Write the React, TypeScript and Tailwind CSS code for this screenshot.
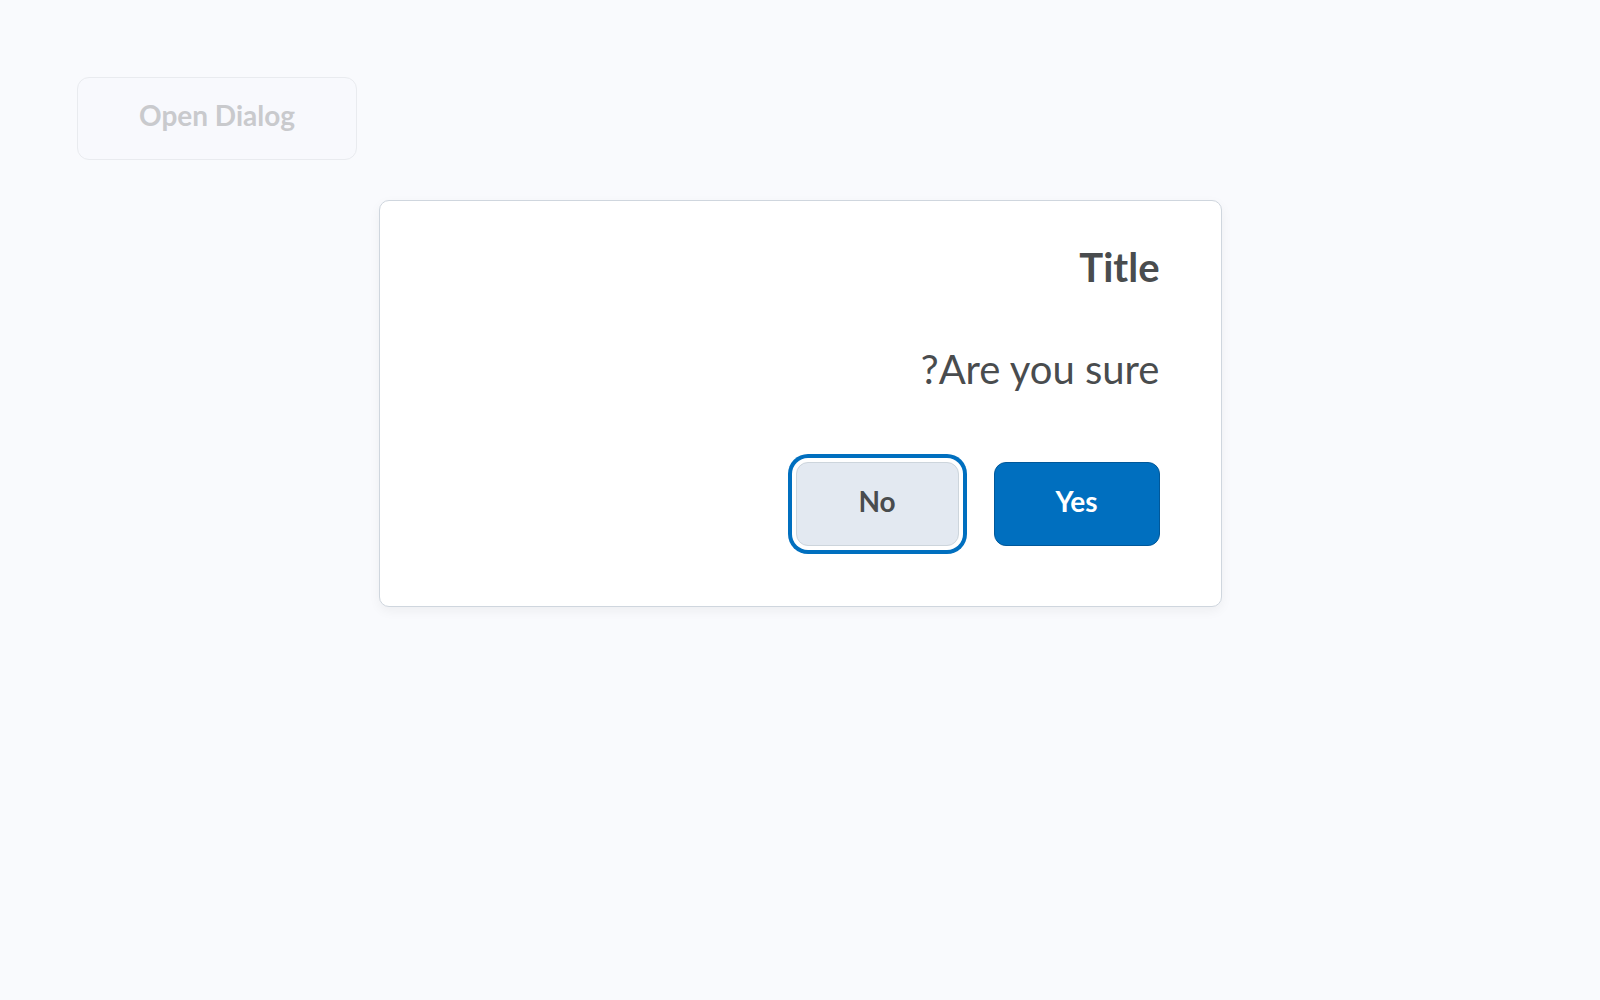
export default function App() {
    return (
        <div className="min-h-screen bg-[#f9fafd] px-[77px] pt-[77px] font-['Lato',sans-serif]">
            <button
                disabled
                className="h-[83px] rounded-[12px] border border-[#e9ebef] bg-[#f8f9fd] px-[61px] pb-[7px] text-[28px] font-bold text-[#c9cacd]"
            >
                Open Dialog
            </button>

            {/* Dialog */}
            <div
                dir="rtl"
                className="mx-auto mt-[40px] w-[843px] rounded-[10px] border border-[#cfd6de] bg-white px-[61px] pt-[42px] pb-[60px] shadow-[0_4px_12px_rgba(0,0,0,0.05)]"
            >
                <h2 className="text-[40px] leading-[48px] font-bold text-[#494c4e]">Title</h2>
                <p className="mt-[52px] text-[40px] leading-[53px] text-[#494c4e]">Are you sure?</p>
                <div className="mt-[66px] flex gap-[35px]">
                    <button className="h-[84px] min-w-[166px] rounded-[12px] border border-[#00589a] bg-[#006fbf] px-[60px] pb-[7px] text-[28px] font-bold text-white">
                        Yes
                    </button>
                    <button className="h-[84px] min-w-[163px] rounded-[12px] border border-[#cdd5dc] bg-[#e3e9f1] px-[60px] pb-[7px] text-[28px] font-bold text-[#494c4e] shadow-[0_0_0_4px_#fff,0_0_0_8px_#006fbf]">
                        No
                    </button>
                </div>
            </div>
        </div>
    )
}
